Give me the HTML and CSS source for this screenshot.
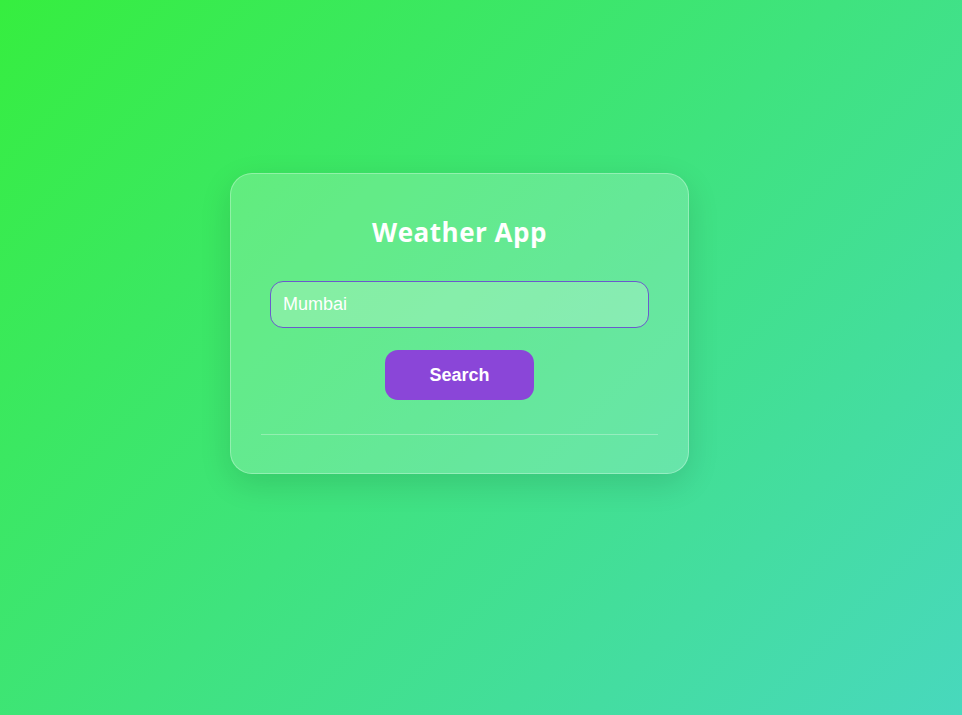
FILE: index.html
```html
<!DOCTYPE html>
<html lang="en">
<head>
<meta charset="utf-8">
<title>Weather App</title>
<link rel="stylesheet" href="styles.css">
</head>
<body>
<main class="page">
  <section class="card">
    <h1 class="title">Weather App</h1>
    <form class="search-form">
      <input class="city-input" type="text" value="Mumbai" autofocus>
      <button class="search-btn" type="button">Search</button>
    </form>
    <div class="result"></div>
  </section>
</main>
</body>
</html>
```

FILE: styles.css
```css
html, body {
  margin: 0;
  height: 100%;
}
body {
  background: linear-gradient(135deg, #36ee3f 0%, #48d8bd 100%);
  font-family: "Liberation Sans", Arial, sans-serif;
  color: #fff;
}
.page {
  padding: 173px 0 0 230px;
}
.card {
  width: 459px;
  box-sizing: border-box;
  padding: 30px 30px 38px;
  background: rgba(255, 255, 255, 0.2);
  border: 1px solid rgba(255, 255, 255, 0.3);
  border-radius: 22px;
  box-shadow: 0 10px 32px rgba(0, 0, 0, 0.12);
  text-align: center;
}
.title {
  margin: 11px 0 32px;
  font-family: "Open Sans", "Noto Sans", sans-serif;
  font-size: 26px;
  font-weight: 700;
  line-height: 34px;
  letter-spacing: 0.5px;
  color: #fff;
}
.search-form {
  padding: 0 9px;
  display: flex;
  flex-direction: column;
  align-items: center;
}
.city-input {
  width: 100%;
  height: 47px;
  box-sizing: border-box;
  padding: 0 12px;
  border: 1px solid #6a5acd;
  border-radius: 13px;
  background: rgba(255, 255, 255, 0.22);
  font-family: "Liberation Sans", Arial, sans-serif;
  font-size: 18px;
  color: #fff;
  outline: none;
}
.search-btn {
  margin-top: 22px;
  width: 149px;
  height: 50px;
  border: none;
  border-radius: 13px;
  background: #8a46d8;
  color: #fff;
  font-family: "Liberation Sans", Arial, sans-serif;
  font-size: 18px;
  font-weight: 700;
  cursor: pointer;
}
.result {
  margin-top: 34px;
  border-top: 1px solid rgba(255, 255, 255, 0.3);
}
```
